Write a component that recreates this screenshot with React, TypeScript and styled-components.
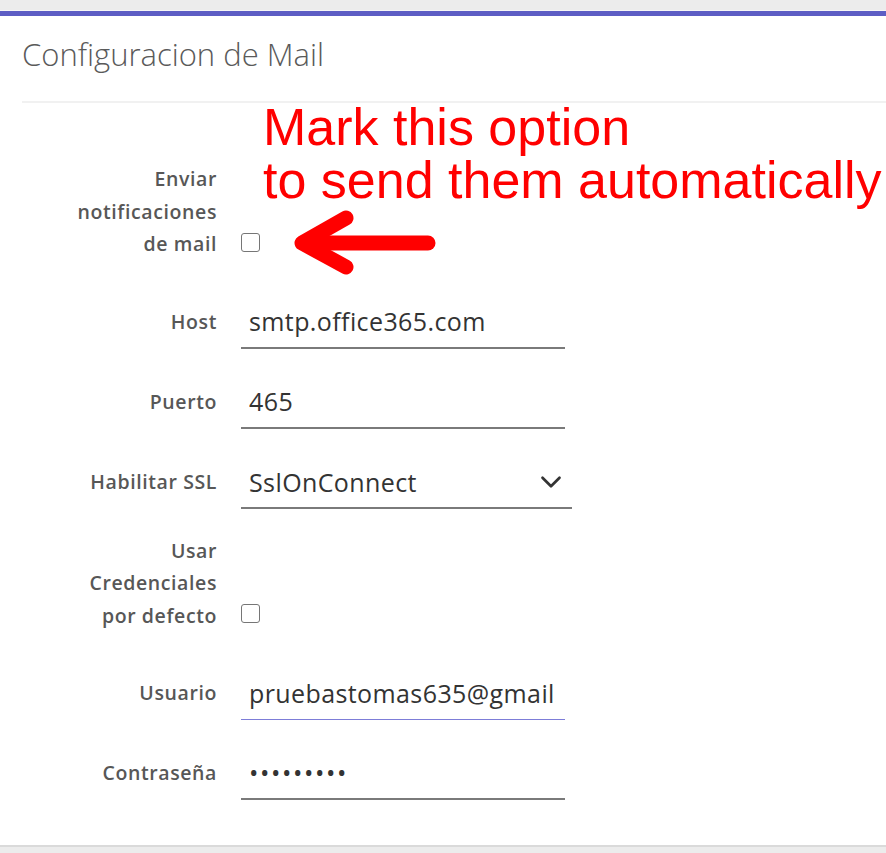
import React from "react";
import styled, { createGlobalStyle } from "styled-components";
import { ChevronDown } from "lucide-react";

const GlobalStyle = createGlobalStyle`
  html, body {
    margin: 0;
    padding: 0;
    background: #fff;
  }
  body {
    font-family: "Open Sans", "Noto Sans", sans-serif;
  }
`;

const Page = styled.div`
  width: 886px;
  height: 853px;
  display: flex;
  flex-direction: column;
  overflow: hidden;
  background: #fff;
`;

const TopBar = styled.div`
  height: 10px;
  flex: none;
  background: #ececec;
  border-bottom: 1px solid #f6f6f6;
`;

const Panel = styled.section`
  position: relative;
  flex: 1;
  border-top: 5px solid #5d5dc4;
  background: #fff;
`;

const Header = styled.header`
  padding: 18px 22px 27px;
`;

const Title = styled.h2`
  margin: 0;
  font-family: "Open Sans", sans-serif;
  font-weight: 300;
  font-size: 31px;
  line-height: 40px;
  color: #5a5a5a;
`;

const Divider = styled.hr`
  margin: 0 0 0 22px;
  border: none;
  height: 2px;
  background: #f1f1f1;
`;

const Form = styled.form`
  display: flex;
  flex-direction: column;
  gap: 34px;
  padding-top: 68px;
`;

const Row = styled.div<{ $check?: boolean }>`
  display: grid;
  grid-template-columns: 217px auto;
  column-gap: 24px;
  align-items: ${(p) => (p.$check ? "end" : "start")};
`;

const Label = styled.label<{ $stacked?: boolean }>`
  text-align: right;
  font-family: "Open Sans", sans-serif;
  font-weight: 600;
  font-size: 19.5px;
  letter-spacing: 0.6px;
  color: #575757;
  line-height: ${(p) => (p.$stacked ? "32.5px" : "33px")};
  padding-top: ${(p) => (p.$stacked ? "0" : "2px")};
  margin: ${(p) => (p.$stacked ? "-8px 0 8px 0" : "0")};
`;

const TextInput = styled.input<{ $focused?: boolean }>`
  box-sizing: border-box;
  width: 324px;
  height: 46px;
  padding: 0 9px 8px 8px;
  border: none;
  border-bottom: ${(p) => (p.$focused ? "1.5px solid #7d7dd8" : "2px solid #7a7a7a")};
  outline: none;
  background: transparent;
  font-family: "Open Sans", sans-serif;
  font-size: 25px;
  letter-spacing: 0.4px;
  color: #333;
`;

const PasswordInput = styled(TextInput)`
  letter-spacing: 1.6px;
`;

const SelectBox = styled.div`
  box-sizing: border-box;
  width: 331px;
  height: 46px;
  display: flex;
  align-items: center;
  border-bottom: 2px solid #7a7a7a;
  color: #333;
  padding: 0 4px 6px 0;
`;

const Select = styled.select`
  flex: 1;
  height: 100%;
  appearance: none;
  border: none;
  outline: none;
  background: transparent;
  padding: 0 8px;
  font-family: "Open Sans", sans-serif;
  font-size: 25px;
  letter-spacing: 0.4px;
  color: #333;
`;

const Check = styled.input`
  appearance: none;
  box-sizing: border-box;
  width: 19px;
  height: 19px;
  margin: 0 0 17px 0;
  border: 1.5px solid #767676;
  border-radius: 3px;
  background: #fff;
`;

const Note = styled.div`
  position: absolute;
  left: 263px;
  top: 85px;
  font-family: "Liberation Sans", Arial, sans-serif;
  font-size: 52px;
  line-height: 53px;
  color: #ff0000;
  white-space: nowrap;
`;

const Arrow = styled.svg`
  position: absolute;
  left: 290px;
  top: 184px;
`;

const BottomBar = styled.div`
  height: 6px;
  flex: none;
  background: #ececec;
  border-top: 2px solid #dadada;
`;

export default function App() {
  return (
    <Page>
      <GlobalStyle />
      <TopBar />
      <Panel>
        <Header>
          <Title>Configuracion de Mail</Title>
        </Header>
        <Divider />
        <Form onSubmit={(e) => e.preventDefault()}>
          <Row $check>
            <Label $stacked>
              Enviar
              <br />
              notificaciones
              <br />
              de mail
            </Label>
            <Check type="checkbox" />
          </Row>
          <Row>
            <Label>Host</Label>
            <TextInput defaultValue="smtp.office365.com" />
          </Row>
          <Row>
            <Label>Puerto</Label>
            <TextInput defaultValue="465" />
          </Row>
          <Row>
            <Label>Habilitar SSL</Label>
            <SelectBox>
              <Select defaultValue="SslOnConnect">
                <option>None</option>
                <option>Auto</option>
                <option>SslOnConnect</option>
                <option>StartTls</option>
              </Select>
              <ChevronDown size={34} strokeWidth={1.9} />
            </SelectBox>
          </Row>
          <Row $check>
            <Label $stacked>
              Usar
              <br />
              Credenciales
              <br />
              por defecto
            </Label>
            <Check type="checkbox" />
          </Row>
          <Row>
            <Label>Usuario</Label>
            <TextInput $focused defaultValue="pruebastomas635@gmail.com" />
          </Row>
          <Row>
            <Label>Contraseña</Label>
            <PasswordInput type="password" defaultValue="123456789" />
          </Row>
        </Form>
        <Note>
          Mark this option
          <br />
          to send them automatically
        </Note>
        <Arrow width="160" height="90" viewBox="290 200 160 90">
          <g
            fill="none"
            stroke="#ff0000"
            strokeWidth="15"
            strokeLinecap="round"
            strokeLinejoin="round"
          >
            <polyline points="346,218 302,243 346,267" />
            <line x1="306" y1="243" x2="428" y2="243" />
          </g>
        </Arrow>
      </Panel>
      <BottomBar />
    </Page>
  );
}
